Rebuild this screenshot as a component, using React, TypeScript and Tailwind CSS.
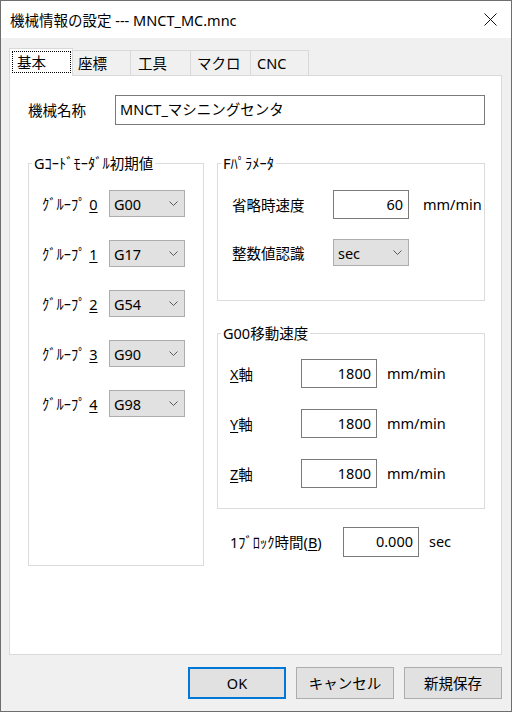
import React from "react";

const Chevron = () => (
  <svg width="9" height="5" viewBox="0 0 9 5" className="shrink-0">
    <polyline points="0.5,0.5 4.5,4.5 8.5,0.5" fill="none" stroke="#5a5a5a" strokeWidth="1" />
  </svg>
);

const Dropdown = ({ value }: { value: string }) => (
  <div className="w-[76px] h-[27px] bg-[#e1e1e1] border border-[#adadad] flex items-center justify-between pl-[4px] pr-[6px]">
    <span>{value}</span>
    <Chevron />
  </div>
);

const NumBox = ({ value, h = "h-[29px]" }: { value: string; h?: string }) => (
  <div className={`w-[76px] ${h} bg-white border border-[#7a7a7a] flex items-center justify-end pr-[5px] pb-[2px]`}>
    {value}
  </div>
);

const groups = [
  { n: "0", v: "G00" },
  { n: "1", v: "G17" },
  { n: "2", v: "G54" },
  { n: "3", v: "G90" },
  { n: "4", v: "G98" },
];

const axes = ["X", "Y", "Z"];

export default function App() {
  return (
    <div className="w-[512px] h-[712px] border border-[#6e6e6e] flex flex-col bg-[#f0f0f0] text-black text-[14.5px] leading-[20px] font-['Noto_Sans','Noto_Sans_CJK_JP',sans-serif]">
      {/* title bar */}
      <div className="h-[37px] bg-white flex items-center justify-between pl-[9px] pr-[14px] shrink-0">
        <div className="text-[14.5px]">機械情報の設定 --- MNCT_MC.mnc</div>
        <svg width="13" height="13" viewBox="0 0 13 13">
          <path d="M0.5 0.5 L12.5 12.5 M12.5 0.5 L0.5 12.5" stroke="#111" strokeWidth="1" />
        </svg>
      </div>

      <div className="flex-1 flex flex-col pt-[10px] pl-[8px] pr-[9px]">
        {/* tabs */}
        <div className="h-[28px] flex items-end -mb-[1px]">
          <div className="relative z-10 w-[64px] h-[28px] bg-white border-l border-t border-r border-[#d9d9d9]">
            <div className="ml-[2px] mt-[2px] w-[59px] h-[22px] border border-dotted border-black pl-[4px] flex items-center">
              基本
            </div>
          </div>
          <div className="w-[58px] h-[26px] border-t border-r border-[#d9d9d9] pl-[5px] pb-[1px] flex items-center">座標</div>
          <div className="w-[60px] h-[26px] border-t border-r border-[#d9d9d9] pl-[7px] pb-[1px] flex items-center">工具</div>
          <div className="w-[60px] h-[26px] border-t border-r border-[#d9d9d9] pl-[6px] pb-[1px] flex items-center">マクロ</div>
          <div className="w-[58px] h-[26px] border-t border-r border-[#d9d9d9] pl-[6px] pb-[1px] flex items-center">CNC</div>
        </div>

        {/* panel */}
        <div className="h-[580px] bg-white border border-[#d9d9d9] pt-[19px] pl-[18px]">
          <div className="flex items-center h-[30px]">
            <div className="w-[87px]">機械名称</div>
            <div className="w-[370px] h-[30px] border border-[#7a7a7a] flex items-center pl-[4px] pb-[2px]">
              MNCT_マシニングセンタ
            </div>
          </div>

          <div className="flex mt-[28px]">
            <fieldset className="w-[176px] h-[413px] border border-[#dcdcdc]">
              <legend className="ml-[3px] px-[2px] leading-[20px]">Gｺｰﾄﾞﾓｰﾀﾞﾙ初期値</legend>
              <div className="pt-[17px] pl-[13px] flex flex-col gap-[23px]">
                {groups.map((g) => (
                  <div key={g.n} className="flex items-center h-[27px]">
                    <div className="w-[67px]">
                      ｸﾞﾙｰﾌﾟ <span className="underline underline-offset-2">{g.n}</span>
                    </div>
                    <Dropdown value={g.v} />
                  </div>
                ))}
              </div>
            </fieldset>

            <div className="ml-[13px] w-[268px] flex flex-col">
              <fieldset className="h-[148px] border border-[#dcdcdc]">
                <legend className="ml-[3px] px-[2px] leading-[20px]">Fﾊﾟﾗﾒｰﾀ</legend>
                <div className="pt-[17px] pl-[14px] flex flex-col gap-[20px]">
                  <div className="flex items-center h-[29px]">
                    <div className="w-[101px]">省略時速度</div>
                    <NumBox value="60" />
                    <div className="ml-[14px] pb-[2px]">mm/min</div>
                  </div>
                  <div className="flex items-center h-[27px]">
                    <div className="w-[101px]">整数値認識</div>
                    <Dropdown value="sec" />
                  </div>
                </div>
              </fieldset>

              <fieldset className="mt-[22px] h-[186px] border border-[#dcdcdc]">
                <legend className="ml-[3px] px-[2px] leading-[20px]">G00移動速度</legend>
                <div className="pt-[16px] pl-[12px] flex flex-col gap-[21px]">
                  {axes.map((a) => (
                    <div key={a} className="flex items-center h-[29px]">
                      <div className="w-[71px]">
                        <span className="underline underline-offset-2">{a}</span>軸
                      </div>
                      <NumBox value="1800" />
                      <div className="ml-[10px] pb-[2px]">mm/min</div>
                    </div>
                  ))}
                </div>
              </fieldset>

              <div className="mt-[18px] pl-[13px] flex items-center h-[30px]">
                <div className="w-[113px]">
                  1ﾌﾞﾛｯｸ時間(<span className="underline underline-offset-2">B</span>)
                </div>
                <NumBox value="0.000" h="h-[30px]" />
                <div className="ml-[10px] pb-[2px]">sec</div>
              </div>
            </div>
          </div>
        </div>

        {/* buttons */}
        <div className="mt-[12px] flex justify-end gap-[10px]">
          <button className="w-[98px] h-[32px] bg-[#e1e1e1] border-2 border-[#0078d7] flex items-center justify-center">
            OK
          </button>
          <button className="w-[98px] h-[32px] bg-[#e1e1e1] border border-[#adadad] flex items-center justify-center">
            キャンセル
          </button>
          <button className="w-[98px] h-[32px] bg-[#e1e1e1] border border-[#adadad] flex items-center justify-center">
            新規保存
          </button>
        </div>
      </div>
    </div>
  );
}
